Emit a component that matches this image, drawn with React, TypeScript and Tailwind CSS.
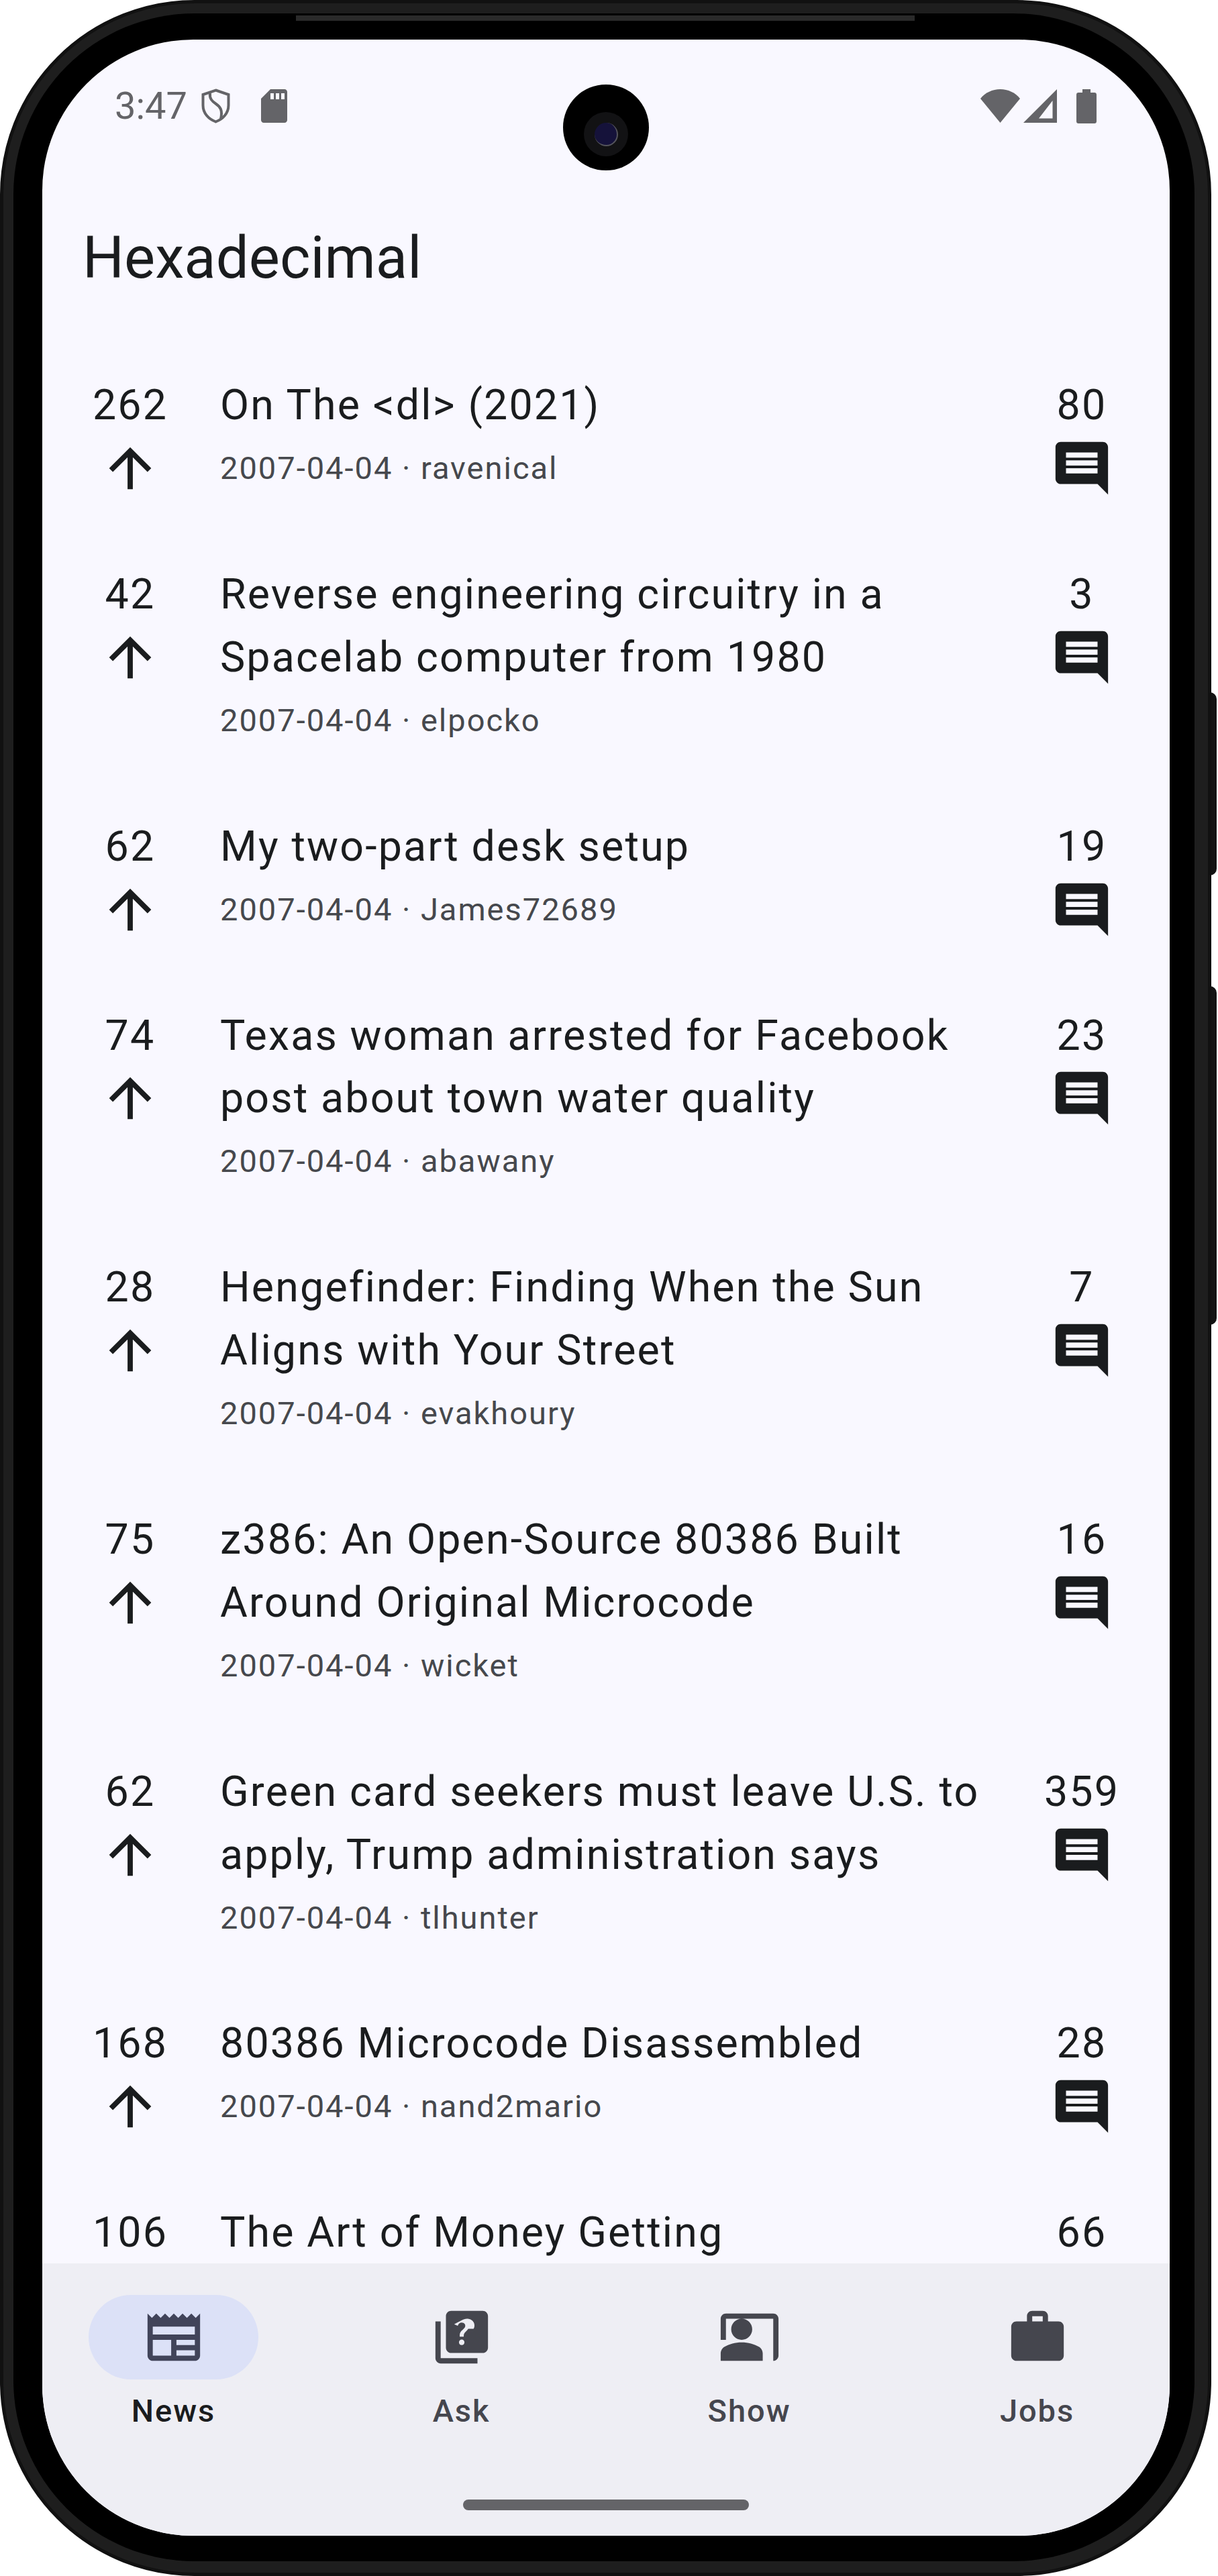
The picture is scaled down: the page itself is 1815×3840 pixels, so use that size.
const stories = [
  { points: 262, title: "On The <dl> (2021)", author: "ravenical", comments: 80 },
  { points: 42, title: "Reverse engineering circuitry in a Spacelab computer from 1980", author: "elpocko", comments: 3 },
  { points: 62, title: "My two-part desk setup", author: "James72689", comments: 19 },
  { points: 74, title: "Texas woman arrested for Facebook post about town water quality", author: "abawany", comments: 23 },
  { points: 28, title: "Hengefinder: Finding When the Sun Aligns with Your Street", author: "evakhoury", comments: 7 },
  { points: 75, title: "z386: An Open-Source 80386 Built Around Original Microcode", author: "wicket", comments: 16 },
  { points: 62, title: "Green card seekers must leave U.S. to apply, Trump administration says", author: "tlhunter", comments: 359 },
  { points: 168, title: "80386 Microcode Disassembled", author: "nand2mario", comments: 28 },
  { points: 106, title: "The Art of Money Getting", author: "", comments: 66 },
];

const paths = {
  arrow: "M4 12l1.41 1.41L11 7.83V20h2V7.83l5.58 5.59L20 12l-8-8-8 8z",
  comment: "M21.99 4c0-1.1-.89-2-1.99-2H4c-1.1 0-2 .9-2 2v12c0 1.1.9 2 2 2h14l4 4-.01-18zM18 14H6v-2h12v2zm0-3H6V9h12v2zm0-3H6V6h12v2z",
  news: "M22 3l-1.67 1.67L18.67 3 17 4.67 15.33 3l-1.66 1.67L12 3l-1.67 1.67L8.67 3 7 4.67 5.33 3 3.67 4.67 2 3v16c0 1.1.9 2 2 2h16c1.1 0 2-.9 2-2V3zM11 19H4v-6h7v6zm9 0h-7v-2h7v2zm0-4h-7v-2h7v2zm0-4H4V8h16v3z",
  ask: "M4 6H2v14c0 1.1.9 2 2 2h14v-2H4V6zm16-4H8c-1.1 0-2 .9-2 2v12c0 1.1.9 2 2 2h12c1.1 0 2-.9 2-2V4c0-1.1-.9-2-2-2zm-7.99 13c-.59 0-1.05-.47-1.05-1.05 0-.59.47-1.04 1.05-1.04.59 0 1.04.45 1.04 1.04-.01.58-.45 1.05-1.04 1.05zm2.5-6.17c-.63.93-1.23 1.21-1.56 1.81-.13.24-.18.4-.18 1.18h-1.52c0-.41-.06-1.08.26-1.65.41-.73 1.18-1.16 1.63-1.8.48-.68.21-1.94-1.14-1.94-.88 0-1.32.67-1.5 1.23l-1.37-.57C11.51 5.96 12.52 5 13.99 5c1.23 0 2.08.56 2.51 1.26.37.61.58 1.73.01 2.57z",
  show: "M21 3H3c-1.1 0-2 .9-2 2v8h2V5h18v16c1.1 0 2-.9 2-2V5c0-1.1-.9-2-2-2zM9 13c2.21 0 4-1.79 4-4s-1.79-4-4-4-4 1.79-4 4 1.79 4 4 4zm6.39 2.56C13.71 14.7 11.53 14 9 14s-4.71.7-6.39 1.56C1.61 16.07 1 17.1 1 18.22V21h16v-2.78c0-1.12-.61-2.15-1.61-2.66z",
  jobs: "M20 6h-4V4c0-1.11-.89-2-2-2h-4c-1.11 0-2 .89-2 2v2H4c-1.11 0-1.99.89-1.99 2L2 19c0 1.11.89 2 2 2h16c1.11 0 2-.89 2-2V8c0-1.11-.89-2-2-2zm-6 0h-4V4h4v2z",
};

function Icon({ d, className }: { d: string; className: string }) {
  return (
    <svg viewBox="0 0 24 24" className={className}>
      <path d={d} />
    </svg>
  );
}

function StatusBar() {
  return (
    <div className="flex h-[198px] shrink-0 items-center justify-between pl-[108px] pr-[109px] text-[#646468]">
      <div className="flex items-center">
        <span className="w-[105px] text-[56px] leading-none">3:47</span>
        <svg viewBox="0 0 43 52" className="ml-[24px] h-[52px] w-[43px]" fill="none" stroke="#646468" strokeWidth="4">
          <path d="M21.5 2.5 L40.5 9 V25 C40.5 37 32 45.5 21.5 49.5 C11 45.5 2.5 37 2.5 25 V9 Z" />
          <path d="M13 7 C12 15 16 19 22 23 C28 27 32 32 29 45" />
        </svg>
        <svg viewBox="0 0 39 50" className="ml-[46px] h-[50px] w-[39px]" fill="#646468">
          <path d="M14 0H35C37.2 0 39 1.8 39 4V46C39 48.2 37.2 50 35 50H4C1.8 50 0 48.2 0 46V14Z M14 6V15H19V6Z M22 6V15H27V6Z M30 6V15H35V6Z" fillRule="evenodd" />
        </svg>
      </div>
      <div className="flex items-center">
        <svg viewBox="0 0 59 50" className="h-[50px] w-[59px]" fill="#646468">
          <path d="M0 14 C7 5 18 0 29.5 0 C41 0 52 5 59 14 L29.5 50 Z" />
        </svg>
        <svg viewBox="0 0 50 50" className="ml-[5px] h-[50px] w-[50px]" fill="#646468">
          <path d="M50 0V50H0Z M43.5 17 L23 43.5H43.5Z" fillRule="evenodd" />
        </svg>
        <svg viewBox="0 0 30 51" className="ml-[29px] h-[51px] w-[30px]" fill="#646468">
          <path d="M9 0H21V5H27C28.7 5 30 6.3 30 8V48C30 49.7 28.7 51 27 51H3C1.3 51 0 49.7 0 48V8C0 6.3 1.3 5 3 5H9Z" />
        </svg>
      </div>
    </div>
  );
}

function StoryRow({ story }: { story: (typeof stories)[number] }) {
  return (
    <div className="flex py-[47px] pl-[63px] pr-[63px] text-[62.7px] leading-[93.9px] tracking-[2.15px] text-[#1a1c1e]">
      <div className="flex w-[136px] shrink-0 flex-col items-center">
        <span>{story.points}</span>
        <Icon d={paths.arrow} className="h-[94px] w-[94px] fill-[#1a1c1e]" />
      </div>
      <div className="ml-[66px] min-w-0 flex-1">
        <div>{story.title}</div>
        {story.author && (
          <div className="text-[47px] tracking-[2px] text-[#46484d]">2007-04-04 · {story.author}</div>
        )}
      </div>
      <div className="ml-[48px] flex w-[136px] shrink-0 flex-col items-center">
        <span>{story.comments}</span>
        <Icon d={paths.comment} className="h-[94px] w-[94px] fill-[#1a1c1e]" />
      </div>
    </div>
  );
}

function BottomNav() {
  const tabs = [
    { label: "News", d: paths.news, active: true },
    { label: "Ask", d: paths.ask, active: false },
    { label: "Show", d: paths.show, active: false },
    { label: "Jobs", d: paths.jobs, active: false },
  ];
  return (
    <div className="flex h-[406px] shrink-0 flex-col bg-[#eeeef4]">
      <div className="flex justify-between pl-[69px] pr-[71px] pt-[47px]">
        {tabs.map((tab) => (
          <div key={tab.label} className="flex w-[253px] flex-col items-center">
            <div className={tab.active ? "flex h-[126px] w-[253px] items-center justify-center rounded-full bg-[#dce1f7]" : "flex h-[126px] w-[253px] items-center justify-center"}>
              <Icon d={tab.d} className={tab.active ? "h-[94px] w-[94px] fill-[#41445a]" : "h-[94px] w-[94px] fill-[#45464e]"} />
            </div>
            <span className={tab.active ? "mt-[16px] text-[47px] font-medium leading-[62px] tracking-[1.96px] text-[#1a1c1e]" : "mt-[16px] text-[47px] font-medium leading-[62px] tracking-[1.96px] text-[#45464e]"}>
              {tab.label}
            </span>
          </div>
        ))}
      </div>
      <div className="mx-auto mt-[101px] h-[16px] w-[426px] rounded-full bg-[#646468]" />
    </div>
  );
}

export default function App() {
  return (
    <div className="relative h-[3840px] w-[1815px] bg-white font-['Roboto',sans-serif]">
      {/* volume and power keys */}
      <div className="absolute left-[1800px] top-[1032px] h-[273px] w-[13px] rounded-r-[10px] bg-[#141414]" />
      <div className="absolute left-[1800px] top-[1470px] h-[505px] w-[13px] rounded-r-[10px] bg-[#141414]" />

      <div className="relative h-[3840px] w-[1805px] rounded-[290px] border-[5px] border-[#111111] bg-[#1e1e1e] p-[15px] pb-[17px] pr-[20px]">
        <div className="h-full w-full rounded-[270px] bg-black pb-[38px] pl-[43px] pr-[37px] pt-[39px]">
          <div className="flex h-full w-full flex-col overflow-hidden rounded-[225px] bg-[#f9f8ff]">
            <StatusBar />
            <div className="mt-[72px] h-[110px] shrink-0 pl-[60px] text-[87px] leading-[110px] text-[#1a1c1e]">Hexadecimal</div>
            <div className="mt-[71px] min-h-0 flex-1 overflow-hidden">
              {stories.map((story) => (
                <StoryRow key={story.title} story={story} />
              ))}
            </div>
            <BottomNav />
          </div>
        </div>

        {/* speaker slit */}
        <div className="absolute left-[436px] top-[18px] h-[8px] w-[922px] bg-[#2a2a2a]" />

        {/* camera */}
        <div className="absolute left-[834px] top-[121px] flex h-[128px] w-[128px] items-center justify-center rounded-full bg-black pt-[20px]">
          <div className="flex h-[66px] w-[66px] items-center justify-center rounded-full bg-[#121214]">
            <div className="h-[35px] w-[35px] rounded-full border-b-2 border-r-2 border-[#55555c] bg-[#15123a]" />
          </div>
        </div>
      </div>
    </div>
  );
}
